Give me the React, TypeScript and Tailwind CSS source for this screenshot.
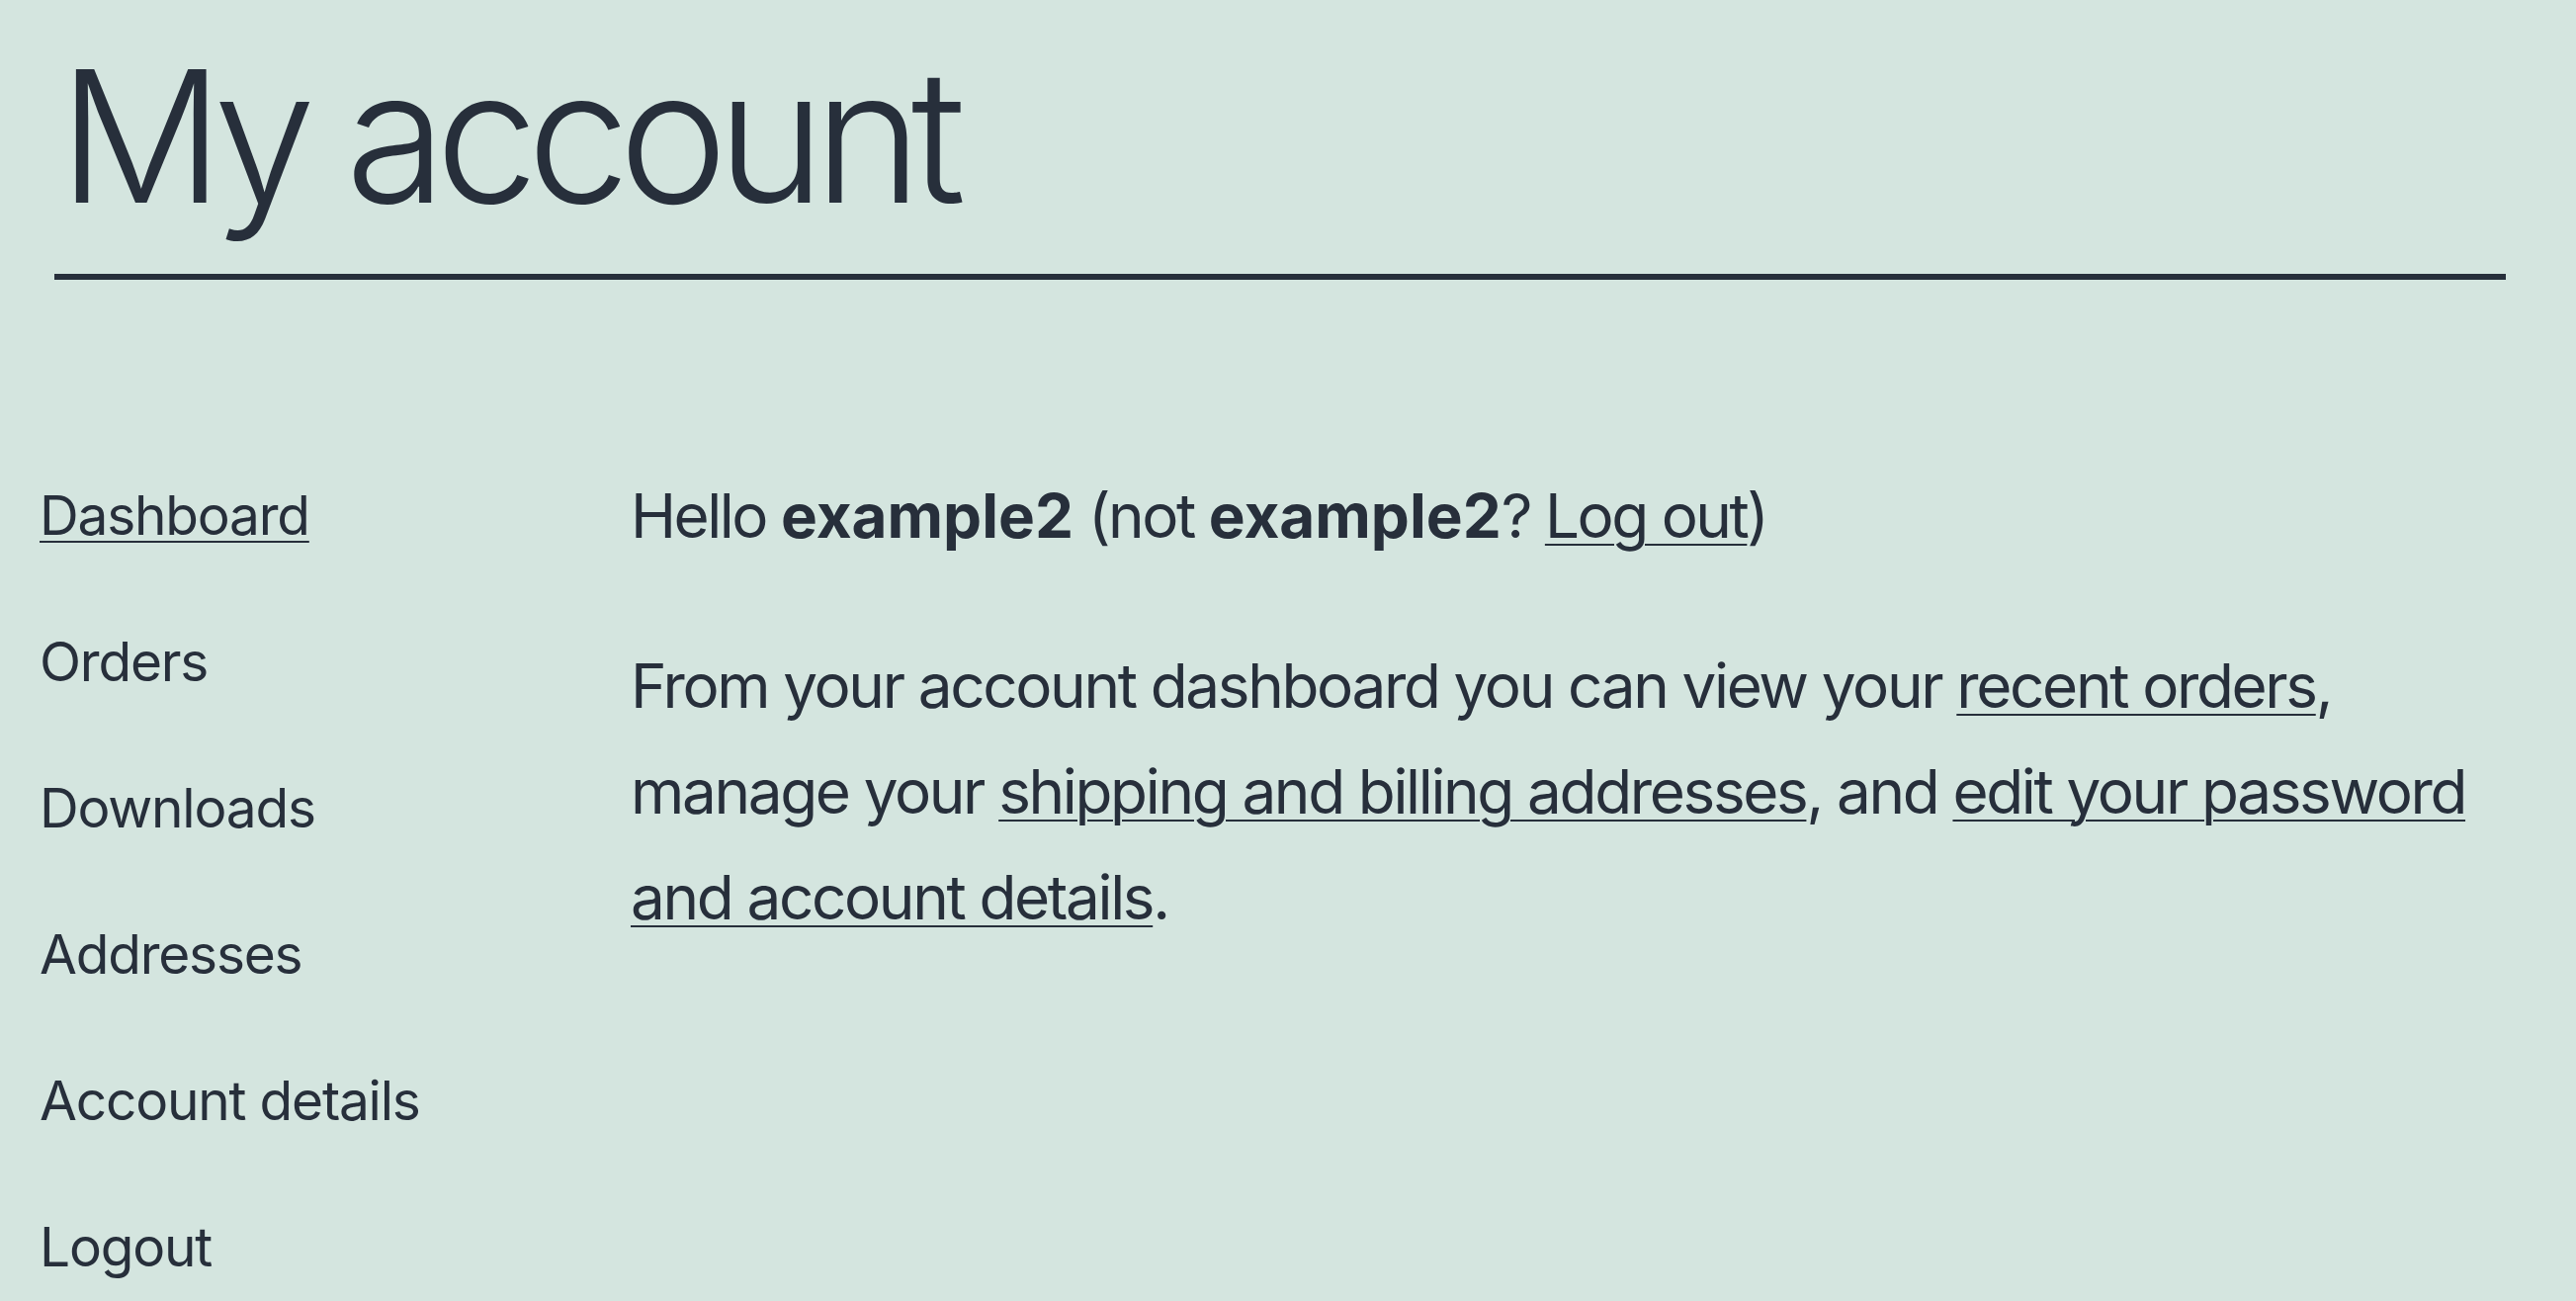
import React from 'react';

const navItems = ['Dashboard', 'Orders', 'Downloads', 'Addresses', 'Account details', 'Logout'];

const linkCls = 'underline decoration-2 underline-offset-[6px]';

const App: React.FC = () => {
  return (
    <div className="min-h-screen bg-[#d4e5df] text-[#272f3b] font-['Inter','Noto_Sans',sans-serif]">
      {/* Page title */}
      <header className="pl-[55px] pr-[71px] pt-[45px]">
        <h1 className="ml-[4px] text-[186px] font-light leading-none tracking-[-0.06em]">My account</h1>
        <div className="mt-[46px] h-[6px] bg-[#272f3b]" />
      </header>

      {/* Account area */}
      <div className="flex items-start pt-[185px] pl-[40px] pr-[71px]">
        <nav className="w-[598px] shrink-0">
          <ul className="flex flex-col gap-[41px] text-[55px] leading-[107px] tracking-[-0.022em]">
            {navItems.map((item, i) => (
              <li key={item}>
                <a href="#" className={i === 0 ? linkCls : 'no-underline'}>
                  {item}
                </a>
              </li>
            ))}
          </ul>
        </nav>

        <main className="flex-1 text-[62px] leading-[107px] tracking-[-0.04em]">
          <p>
            Hello <strong className="font-bold tracking-normal">example2</strong> (not{' '}
            <strong className="font-bold tracking-normal">example2</strong>?{' '}
            <a href="#" className={linkCls}>
              Log out
            </a>
            )
          </p>
          <p className="mt-[65px] tracking-[-0.038em]">
            From your account dashboard you can view your{' '}
            <a href="#" className={linkCls}>
              recent orders
            </a>
            , manage your{' '}
            <a href="#" className={linkCls}>
              shipping and billing addresses
            </a>
            , and{' '}
            <a href="#" className={linkCls}>
              edit your password and account details
            </a>
            .
          </p>
        </main>
      </div>
    </div>
  );
};

export default App;
